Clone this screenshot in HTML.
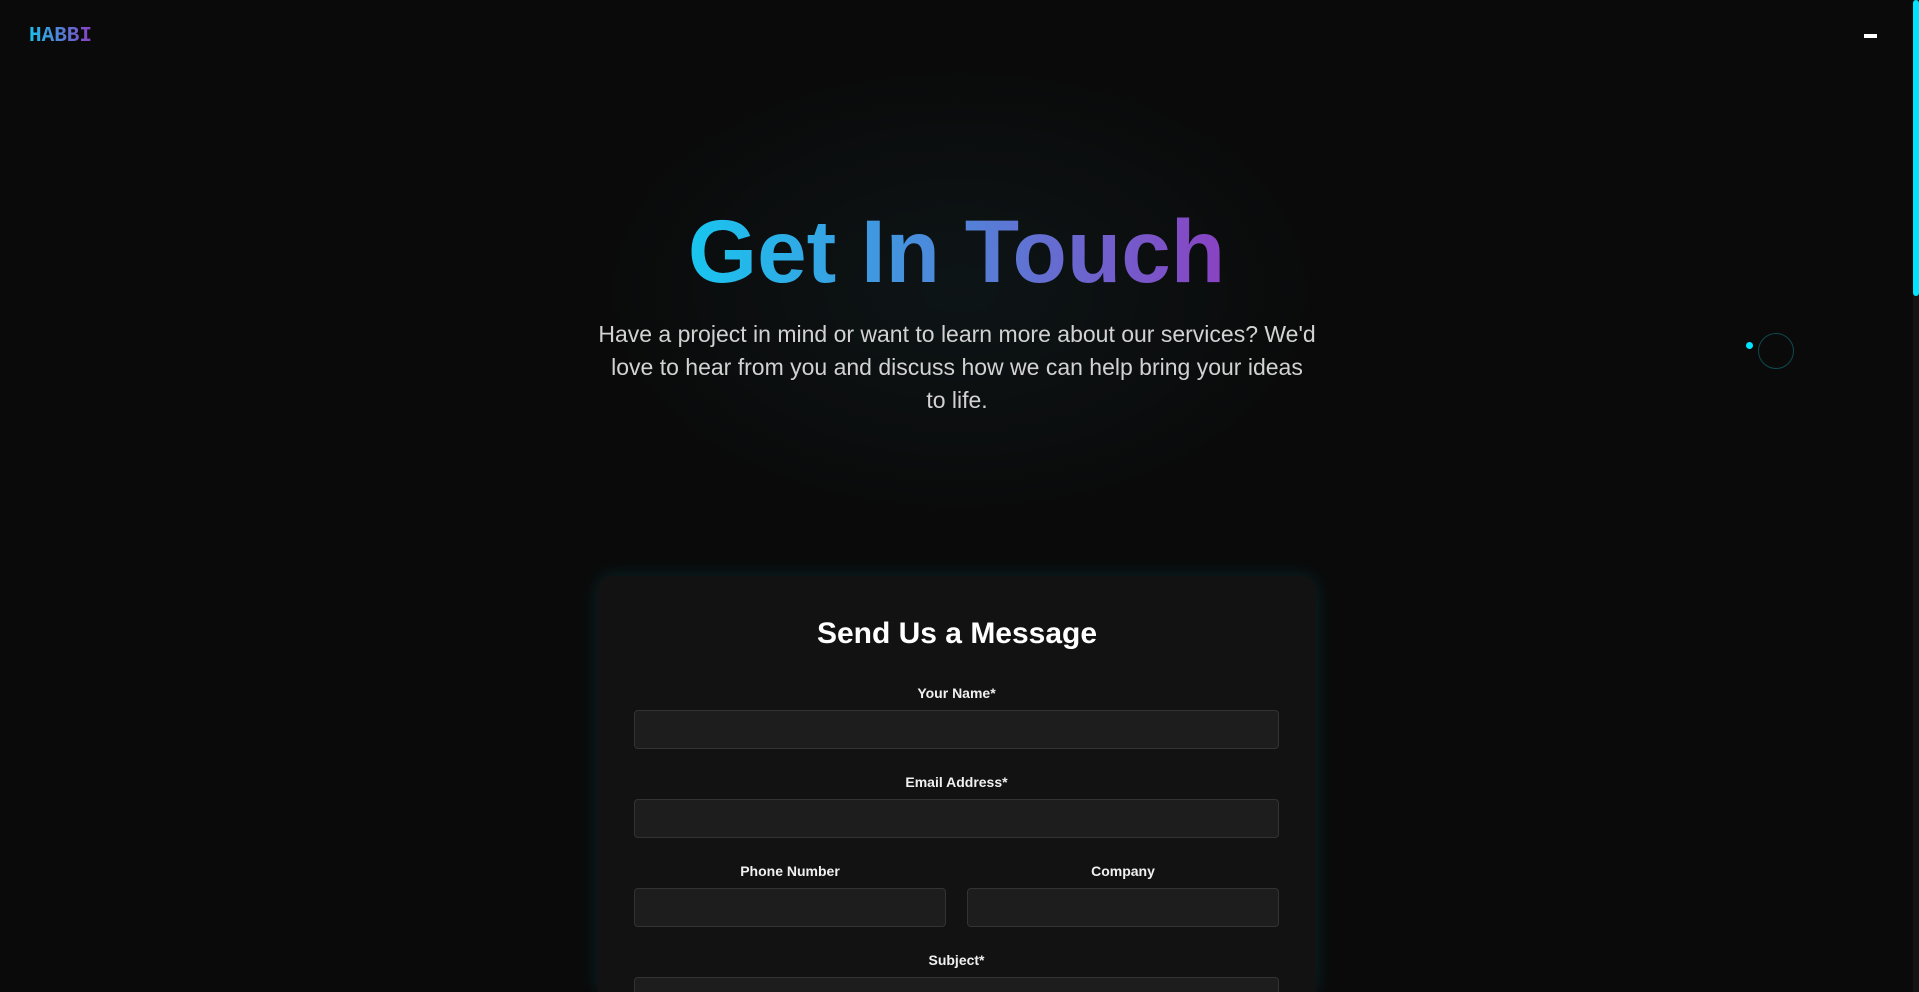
<!DOCTYPE html>
<html><head><meta charset="utf-8"><style>
*{margin:0;padding:0;box-sizing:border-box}
html,body{width:1919px;height:992px;overflow:hidden;background:#0a0a0a;font-family:"Liberation Sans",sans-serif;color:#fff}
#wrap{position:relative;width:1919px;height:992px;overflow:hidden}
.glow{position:absolute;left:560px;top:40px;width:800px;height:500px;background:radial-gradient(ellipse at center,rgba(20,40,45,0.35),rgba(10,10,10,0) 65%)}
.logo{position:absolute;left:29px;top:25px;font-family:"Liberation Mono",monospace;font-weight:bold;font-size:21px;background:linear-gradient(90deg,#1cc0ec,#8a3fc0);-webkit-background-clip:text;color:transparent}
.ham{position:absolute;left:1864px;top:34px;width:13px;height:4px;background:#fff}
.sb{position:absolute;left:1913px;top:0;width:6px;height:992px;background:#141414}
.sb div{width:6px;height:296px;background:#00e5ff;border-radius:3px}
h1{position:absolute;left:0;width:1913px;top:196px;text-align:center;font-size:89px;font-weight:bold;line-height:110px}
h1 span{background:linear-gradient(90deg,#18c6ef,#8a42c2);-webkit-background-clip:text;color:transparent}
p.lead{position:absolute;left:591px;width:732px;top:318px;text-align:center;font-size:23px;line-height:33px;color:#d2d2d2}
.dot{position:absolute;left:1746px;top:342px;width:7px;height:7px;border-radius:50%;background:#00e5ff}
.ring{position:absolute;left:1758px;top:333px;width:36px;height:36px;border-radius:50%;border:1px solid #0f4a50}
.card{position:absolute;left:598px;top:576px;width:718px;height:416px;background:#121212;border-radius:14px 14px 0 0;box-shadow:0 0 18px rgba(0,200,230,0.15)}
h2{position:absolute;left:598px;width:718px;top:617px;text-align:center;font-size:30px;font-weight:bold}
.lbl{position:absolute;text-align:center;font-size:14px;font-weight:bold;color:#f0f0f0}
.in{position:absolute;height:39px;background:#1d1d1d;border:1px solid #333;border-radius:4px}
</style></head><body><div id="wrap">
<div class="glow"></div>
<div class="logo">HABBI</div>
<div class="ham"></div>
<h1><span>Get In Touch</span></h1>
<p class="lead">Have a project in mind or want to learn more about our services? We'd love to hear from you and discuss how we can help bring your ideas<br>to life.</p>
<div class="dot"></div><div class="ring"></div>
<div class="card"></div>
<h2>Send Us a Message</h2>
<div class="lbl" style="left:634px;width:645px;top:685px">Your Name*</div>
<div class="in" style="left:634px;width:645px;top:710px"></div>
<div class="lbl" style="left:634px;width:645px;top:774px">Email Address*</div>
<div class="in" style="left:634px;width:645px;top:799px"></div>
<div class="lbl" style="left:634px;width:312px;top:863px">Phone Number</div>
<div class="lbl" style="left:967px;width:312px;top:863px">Company</div>
<div class="in" style="left:634px;width:312px;top:888px"></div>
<div class="in" style="left:967px;width:312px;top:888px"></div>
<div class="lbl" style="left:634px;width:645px;top:952px">Subject*</div>
<div class="in" style="left:634px;width:645px;top:977px;height:15px;border-bottom:none;border-radius:4px 4px 0 0"></div>
<div class="sb"><div></div></div>
</div></body></html>
